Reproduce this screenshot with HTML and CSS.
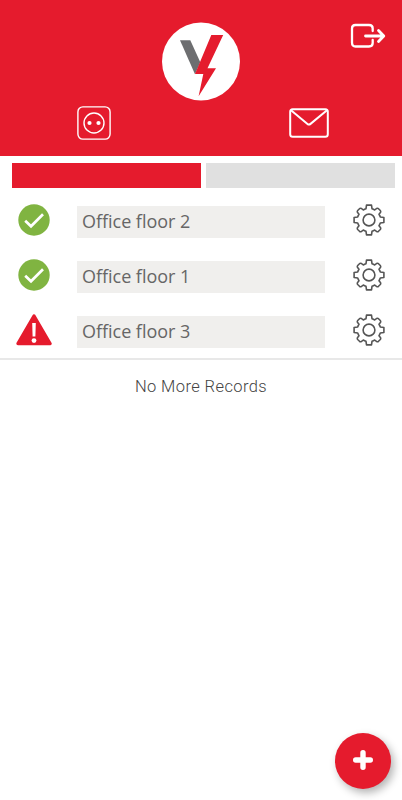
FILE: index.html
```html
<!DOCTYPE html>
<html lang="en">
<head>
<meta charset="utf-8">
<title>Offices</title>
<link rel="stylesheet" href="styles.css">
</head>
<body>
<svg class="defs" width="0" height="0">
  <symbol id="check" viewBox="0 0 32 32"><circle cx="16" cy="16" r="15.7" fill="#80b441"/><path d="M7.2 16.7 13 22.3 25 10.2" fill="none" stroke="#fff" stroke-width="2.7"/></symbol>
  <symbol id="gear" viewBox="0 0 32 32"><g fill="none" stroke="#555" stroke-width="1.6" stroke-linejoin="round"><circle cx="16" cy="16" r="5.9"/><path d="M13.5 1.1h5l.5 3.600q1.500.5 2.700 1.300l2-1.600q1-.4 1.800.3l1.800 1.800q.7.8.3 1.800L26 10.300q.8 1.200 1.300 2.700l3.600.5v5l-3.600.5q-.5 1.500-1.300 2.700l1.600 2q.4 1-.3 1.800l-1.800 1.800q-.8.7-1.800.3L21.700 26q-1.200.8-2.700 1.300l-.5 3.600h-5l-.5-3.600q-1.500-.5-2.700-1.300l-2 1.600q-1 .4-1.800-.3l-1.800-1.800q-.7-.8-.3-1.800L6 21.700q-.8-1.200-1.300-2.700l-3.600-.5v-5l3.600-.5q.5-1.500 1.300-2.700l-1.600-2q-.4-1 .3-1.800l1.800-1.800q.8-.7 1.800-.3L10.300 6q1.200-.8 2.700-1.300z"/></g></symbol>
</svg>
<header class="header">
  <svg class="logo" viewBox="0 0 78 79"><circle cx="39" cy="39.5" r="39" fill="#fff"/><path d="M18 18.300h10.300l10 22-5.300 12z" fill="#6d6e70"/><path d="M49.300 13h11.900L45.500 46.300H54L36.600 74.200 41.300 52H33z" fill="#e51b2d"/></svg>
  <svg class="logout" viewBox="0 0 36 26" fill="none" stroke="#fff" stroke-width="2.3" stroke-linecap="round" stroke-linejoin="round"><path d="M22.700 8V5.500Q22.700 2 19 2H5.500Q2 2 2 5.500v14Q2 23.500 5.500 23.500H19q3.700 0 3.700-3.500v-3"/><path d="M15.500 13h18M28.500 7.500l5.300 5.500-5.300 5.500" stroke-width="2.800"/></svg>
  <nav class="tabs">
    <div class="tab"><svg width="34" height="34" viewBox="0 0 34 34" fill="none" stroke="#fff" stroke-width="1.4"><rect x=".9" y=".9" width="32.2" height="32.2" rx="5"/><circle cx="17" cy="17" r="10"/><g fill="#fff" stroke="none"><circle cx="12.5" cy="17" r="2.1"/><circle cx="21.5" cy="17" r="2.1"/></g></svg></div>
    <div class="tab"><svg width="40" height="30" viewBox="0 0 40 30" fill="none" stroke="#fff" stroke-width="2" stroke-linejoin="round"><rect x="1.2" y="1.2" width="37.6" height="27.6" rx="2.5"/><path d="M2 2.200 18.500 15.900q1.500 1.200 3 0L38 2.200"/></svg></div>
  </nav>
</header>
<main>
  <div class="steps"><div class="step active"></div><div class="step"></div></div>
  <div class="list">
    <div class="row"><svg class="status"><use href="#check"/></svg><div class="name">Office floor 2</div><svg class="gear"><use href="#gear"/></svg></div>
    <div class="row"><svg class="status"><use href="#check"/></svg><div class="name">Office floor 1</div><svg class="gear"><use href="#gear"/></svg></div>
    <div class="row"><svg class="status warn" viewBox="0 0 36 32"><path d="M18 2 34 29.500H2z" fill="#e51b2d" stroke="#e51b2d" stroke-width="3.4" stroke-linejoin="round"/><path d="M16.200 9h3.600l-.4 13.500h-2.800z" fill="#fff"/><circle cx="18" cy="26.600" r="2.400" fill="#fff"/></svg><div class="name">Office floor 3</div><svg class="gear"><use href="#gear"/></svg></div>
  </div>
  <p class="end">No More Records</p>
</main>
<button class="add" aria-label="Add"><svg width="20" height="20" viewBox="0 0 20 20"><path d="M10 2.700v14.600M2.700 10h14.600" stroke="#fff" stroke-width="5.400" stroke-linecap="round"/></svg></button>
</body>
</html>
```
FILE: styles.css
```css
* { box-sizing: border-box; }
body { margin: 0; height: 800px; overflow: hidden; background: #fff; font-family: "Open Sans", sans-serif; }
svg { display: block; flex: none; }
.defs { position: absolute; }
.header { position: relative; height: 156px; padding-top: 22px; background: #e51b2d; }
.logo { width: 78px; height: 79px; margin: 0 auto; }
.logout { position: absolute; top: 23px; right: 16.5px; width: 36px; height: 26px; }
.tabs { display: grid; grid-template-columns: 188px 214px; height: 44px; align-items: center; }
.tab { display: flex; justify-content: center; }
.tab:last-child { padding-left: 28px; }
.steps { display: grid; grid-template-columns: 189px 189px; gap: 5px; padding: 7px 7px 0 12px; }
.step { height: 25px; background: #e0e0e0; }
.step.active { background: #e51b2d; }
.list { height: 172px; padding-top: 5px; border-bottom: 2px solid #e8e8e8; }
.row { display: grid; grid-template-columns: 77px 248px 77px; height: 54.7px; align-items: center; }
.status { width: 32px; height: 32px; margin-left: 17.5px; }
.status.warn { width: 36px; margin-left: 15.5px; }
.name { height: 32px; margin-top: 4px; padding-left: 5px; background: #f0efed; color: #666; font-size: 18px; font-weight: 400; line-height: 30px; letter-spacing: -.03px; white-space: nowrap; }
.gear { width: 32px; height: 32px; margin-left: 27.5px; }
.end { margin: 16px 0 0; text-align: center; color: #444; font: 300 16.5px/22px Roboto, sans-serif; letter-spacing: .4px; }
.add { position: absolute; right: 11px; bottom: 11px; width: 56px; height: 56px; display: flex; align-items: center; justify-content: center; padding: 0 0 3px; border: 0; border-radius: 50%; background: #e51b2d; box-shadow: 3px 4px 8px rgba(0,0,0,.3); }
```
